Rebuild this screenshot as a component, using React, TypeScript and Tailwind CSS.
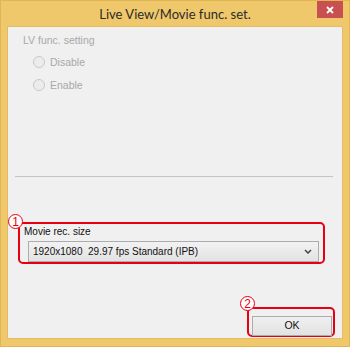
import React from "react";

const Badge: React.FC<{ n: string; className: string }> = ({ n, className }) => (
  <div
    className={`absolute w-[15px] h-[15px] rounded-full border-[1.5px] border-[#e60012] bg-white flex items-center justify-center text-[12px] leading-none text-[#e60012] font-['Liberation_Sans',sans-serif] ${className}`}
  >
    {n}
  </div>
);

const Radio: React.FC<{ label: string }> = ({ label }) => (
  <div className="flex items-center h-[14px]">
    <span className="w-[12px] h-[12px] rounded-full border border-[#c8c8c8] bg-[#ececec]" />
    <span className="ml-[5px] text-[10.5px] leading-[14px] text-[#a8a8a8]">{label}</span>
  </div>
);

export default function App() {
  return (
    <div className="w-[350px] h-[347px] bg-[#f0c86c] border border-[#e2b456] flex flex-col font-['Liberation_Sans',Arial,sans-serif]">
      {/* barra de título */}
      <div className="relative h-[25px] flex items-center justify-center">
        <span className="text-[13px] text-[#2b2b2b] font-['Lato',sans-serif] mt-[3px]">
          Live View/Movie func. set.
        </span>
        <button className="absolute right-[6px] top-0 w-[26px] h-[17px] bg-[#c75050] flex items-center justify-center">
          <svg width="8" height="8" viewBox="0 0 8 8">
            <path d="M1 1 L7 7 M7 1 L1 7" stroke="white" strokeWidth="1.8" />
          </svg>
        </button>
      </div>

      {/* contenido */}
      <div className="flex-1 mx-[6px] mb-[7px] bg-[#f0f0f0] border border-[#e5bc62] flex flex-col">
        <div className="pl-[15px] pt-[6px] text-[10.5px] leading-[14px] text-[#a8a8a8]">LV func. setting</div>
        <div className="pl-[25px] pt-[8px] flex flex-col gap-[9px]">
          <Radio label="Disable" />
          <Radio label="Enable" />
        </div>

        <div className="mt-[84px] ml-[7px] mr-[9px] h-px bg-[#c4c4c4]" />

        {/* tamaño de grabación */}
        <div className="relative mt-[45px] ml-[10px] w-[307px] h-[42px] border-2 border-[#e60012] rounded-[5px] px-[4px] pt-[2px]">
          <Badge n="1" className="-left-[12px] -top-[10px]" />
          <div className="text-[10px] leading-[12px] text-[#111]">Movie rec. size</div>
          <div className="mt-[3px] ml-[4px] w-[291px] h-[21px] border border-[#acacac] bg-gradient-to-b from-[#f2f2f2] to-[#e3e3e3] flex items-center justify-between pl-[4px] pr-[6px]">
            <span className="text-[10px] text-[#111] whitespace-pre">1920x1080  29.97 fps Standard (IPB)</span>
            <svg width="8" height="5" viewBox="0 0 8 5">
              <path d="M1 1 L4 4 L7 1" fill="none" stroke="#444" strokeWidth="1.5" />
            </svg>
          </div>
        </div>

        {/* botón OK */}
        <div className="flex-1" />
        <div className="relative self-end mr-[7px] mb-px w-[88px] h-[30px] border-2 border-[#e60012] rounded-[5px] pl-[3px] pr-px pt-[3px]">
          <Badge n="2" className="-left-[9px] -top-[13px]" />
          <button className="w-[80px] h-[20px] border border-[#acacac] bg-gradient-to-b from-[#f0f0f0] to-[#e2e2e2] text-[10.5px] text-[#111]">
            OK
          </button>
        </div>
      </div>
    </div>
  );
}
